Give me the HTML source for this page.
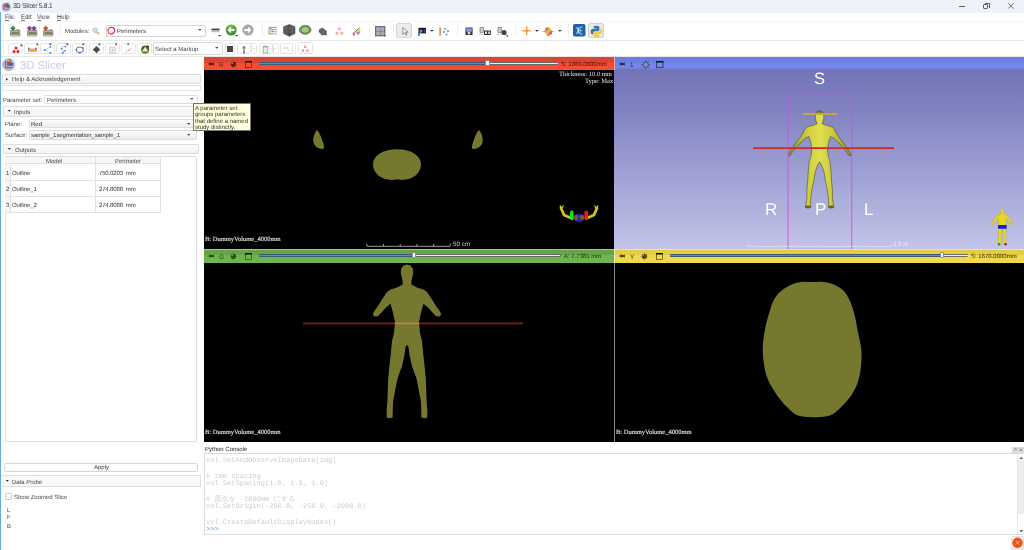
<!DOCTYPE html>
<html><head><meta charset="utf-8">
<style>
*{box-sizing:border-box;margin:0;padding:0}
html,body{width:1024px;height:550px;overflow:hidden;background:#fff;font-family:"Liberation Sans",sans-serif;font-size:6px;color:#222}
.a{position:absolute}
.t{position:absolute;white-space:nowrap;line-height:1;will-change:transform;text-rendering:geometricPrecision}
.serif{font-family:"Liberation Serif",serif}
.mono{font-family:"Liberation Mono",monospace}
</style></head><body>
<div class="a" style="left:0px;top:0px;width:1024px;height:12.6px;background:#eef2f9"></div>
<div class="a" style="left:1.2px;top:20.6px;width:1022.8px;height:1.8px;background:#f6f6f6"></div>
<svg class="a" style="left:1px;top:1.5px;" width="11" height="11" viewBox="0 0 11 11"><circle cx="5.2" cy="5" r="4.6" fill="#aab3d3"/><rect x="3.3" y="1.8" width="3.6" height="3.6" fill="#d2452f"/><rect x="5.3" y="1.2" width="2.2" height="2.2" fill="#3a9a3a"/><rect x="6.3" y="3.2" width="2.2" height="2.6" fill="#2f5fb0"/><path d="M2.6 2.6 L2.6 7.2 L7.6 7.2" stroke="#7c86aa" stroke-width="1" fill="none"/></svg>
<div class="t" style="left:13.3px;top:3.6px;font-size:6.9px;color:#1f1f1f;transform:scaleX(0.87);transform-origin:0 0">3D Slicer 5.8.1</div>
<div class="a" style="left:959px;top:5.7px;width:5.8px;height:0.9px;background:#5a5a5a"></div>
<div class="a" style="left:983px;top:4.2px;width:4.8px;height:4.6px;border:0.9px solid #555;border-radius:1.2px;background:#eef2f9"></div>
<div class="a" style="left:984.6px;top:3.4px;width:4.4px;height:0.8px;background:#555;border-radius:1px"></div>
<div class="a" style="left:988.6px;top:3.4px;width:0.8px;height:4.4px;background:#555;border-radius:1px"></div>
<svg class="a" style="left:1006.9px;top:2.2px;" width="8" height="8" viewBox="0 0 8 8"><path d="M1.2 1.2 L6.6 6.6 M6.6 1.2 L1.2 6.6" stroke="#555" stroke-width="0.8"/></svg>
<div class="a" style="left:0px;top:12.3px;width:1.2px;height:537.7px;background:#6fa8dc"></div>
<div class="t" style="left:5.2px;top:15.4px;font-size:6.7px;color:#333;transform:scaleX(0.88);transform-origin:0 0">File</div>
<div class="a" style="left:5.4px;top:19.9px;width:3.2px;height:0.5px;background:#777"></div>
<div class="t" style="left:21px;top:15.4px;font-size:6.7px;color:#333;transform:scaleX(0.88);transform-origin:0 0">Edit</div>
<div class="a" style="left:21.2px;top:19.9px;width:3.4px;height:0.5px;background:#777"></div>
<div class="t" style="left:37px;top:15.4px;font-size:6.7px;color:#333;transform:scaleX(0.88);transform-origin:0 0">View</div>
<div class="a" style="left:37.2px;top:19.9px;width:3.8px;height:0.5px;background:#777"></div>
<div class="t" style="left:56.8px;top:15.4px;font-size:6.7px;color:#333;transform:scaleX(0.88);transform-origin:0 0">Help</div>
<div class="a" style="left:57.0px;top:19.9px;width:4px;height:0.5px;background:#777"></div>
<div class="a" style="left:1.2px;top:39.6px;width:1022.8px;height:1.4px;background:#e9e9e9"></div>
<div class="a" style="left:1.2px;top:56px;width:1022.8px;height:0.8px;background:#e6e6e6"></div>
<div class="a" style="left:3px;top:25px;width:1px;height:11px;background:repeating-linear-gradient(#d8d8d8 0 1px,transparent 1px 2px)"></div>
<svg class="a" style="left:9.6px;top:24.5px;" width="11" height="12" viewBox="0 0 11 12"><path d="M6.3 5.2 Q8 3.6 9.6 5.2Z" fill="#e2cf7a" stroke="#6d6a50" stroke-width="0.35"/><rect x="0.5" y="5.3" width="9.4" height="5.8" rx="0.8" fill="#b7b293" stroke="#55533f" stroke-width="0.5"/><rect x="1.6" y="7.2" width="7.2" height="2.3" fill="#7b7864"/><rect x="1.4" y="10" width="7.6" height="0.6" fill="#e8dca0"/><path d="M3 0.9 L5.3 3.2 L3 5.5 L0.7000000000000002 3.2Z" fill="#2a8a4a" stroke="#333" stroke-width="0.35"/></svg>
<svg class="a" style="left:26.6px;top:24.5px;" width="11" height="12" viewBox="0 0 11 12"><path d="M6.3 5.2 Q8 3.6 9.6 5.2Z" fill="#e2cf7a" stroke="#6d6a50" stroke-width="0.35"/><rect x="0.5" y="5.3" width="9.4" height="5.8" rx="0.8" fill="#b7b293" stroke="#55533f" stroke-width="0.5"/><rect x="1.6" y="7.2" width="7.2" height="2.3" fill="#7b7864"/><rect x="1.4" y="10" width="7.6" height="0.6" fill="#e8dca0"/><path d="M2.4 0.9 L4.699999999999999 3.2 L2.4 5.5 L0.10000000000000009 3.2Z" fill="#8a3ab0" stroke="#333" stroke-width="0.35"/><path d="M6.9 0.9 L9.2 3.2 L6.9 5.5 L4.6000000000000005 3.2Z" fill="#8a3ab0" stroke="#333" stroke-width="0.35"/></svg>
<svg class="a" style="left:43px;top:24.5px;" width="11" height="12" viewBox="0 0 11 12"><path d="M6.3 5.2 Q8 3.6 9.6 5.2Z" fill="#e2cf7a" stroke="#6d6a50" stroke-width="0.35"/><rect x="0.5" y="5.3" width="9.4" height="5.8" rx="0.8" fill="#b7b293" stroke="#55533f" stroke-width="0.5"/><rect x="1.6" y="7.2" width="7.2" height="2.3" fill="#7b7864"/><rect x="1.4" y="10" width="7.6" height="0.6" fill="#e8dca0"/><path d="M2.7 0.9 L5.0 3.2 L2.7 5.5 L0.40000000000000036 3.2Z" fill="#d2541c" stroke="#333" stroke-width="0.35"/></svg>
<div class="a" style="left:60px;top:24px;width:0.8px;height:13px;background:#efefef"></div>
<div class="t" style="left:65px;top:28.9px;font-size:6px;color:#444">Modules:</div>
<svg class="a" style="left:92px;top:26.5px;" width="8" height="8" viewBox="0 0 8 8"><circle cx="3.2" cy="3.2" r="2.2" fill="#cfe3f5" stroke="#8fb6d8" stroke-width="0.7"/><path d="M4.8 4.8 L7 7" stroke="#c89a50" stroke-width="1.2"/></svg>
<div class="a" style="left:105.5px;top:24.6px;width:100px;height:12.2px;border:0.8px solid #d4d4d4;border-radius:2px;background:#fff"></div>
<svg class="a" style="left:106.5px;top:26px;" width="9" height="9" viewBox="0 0 9 9"><ellipse cx="4.3" cy="4.6" rx="3.2" ry="3.4" transform="rotate(35 4.3 4.6)" fill="none" stroke="#e8202a" stroke-width="1.1"/></svg>
<div class="t" style="left:117px;top:29px;font-size:6px;color:#333">Perimeters</div>
<svg class="a" style="left:197.6px;top:29.400000000000002px;" width="3.8" height="2.3" viewBox="0 0 3.8 2.3"><path d="M0 0 L3.8 0 L1.9 1.8Z" fill="#444"/></svg>
<svg class="a" style="left:210.5px;top:27.5px;" width="9" height="5" viewBox="0 0 9 5"><rect x="0.5" y="0.6" width="8" height="1.8" fill="#3a3a3a"/><rect x="0.5" y="2.4" width="8" height="1.8" fill="#bdbdbd"/></svg>
<svg class="a" style="left:218.4px;top:34.9px;" width="3.2" height="1.9" viewBox="0 0 3.2 1.9"><path d="M0 0 L3.2 0 L1.6 1.4Z" fill="#333"/></svg>
<svg class="a" style="left:225px;top:24px;" width="12" height="12" viewBox="0 0 12 12"><defs><radialGradient id="gg" cx="0.4" cy="0.3" r="0.8"><stop offset="0" stop-color="#7ccc4a"/><stop offset="1" stop-color="#2b7d21"/></radialGradient></defs><circle cx="6.1" cy="6" r="5.5" fill="url(#gg)"/><path d="M2.6 6 L6 2.8 L6 4.9 L9.6 4.9 L9.6 7.1 L6 7.1 L6 9.2Z" fill="#fff"/></svg>
<svg class="a" style="left:235.0px;top:34.9px;" width="3.2" height="1.9" viewBox="0 0 3.2 1.9"><path d="M0 0 L3.2 0 L1.6 1.4Z" fill="#333"/></svg>
<svg class="a" style="left:241.5px;top:24px;" width="12" height="12" viewBox="0 0 12 12"><circle cx="6" cy="6" r="5.3" fill="#a8a8a8" stroke="#9a9a9a" stroke-width="0.5"/><path d="M9.4 6 L6 2.8 L6 4.9 L2.4 4.9 L2.4 7.1 L6 7.1 L6 9.2Z" fill="#fff"/></svg>
<svg class="a" style="left:251.4px;top:35.2px;" width="2.2" height="1.3" viewBox="0 0 2.2 1.3"><path d="M0 0 L2.2 0 L1.1 0.8Z" fill="#bbb"/></svg>
<div class="a" style="left:262px;top:24px;width:0.8px;height:13px;background:#efefef"></div>
<svg class="a" style="left:267.5px;top:26px;" width="10" height="10" viewBox="0 0 10 10"><rect x="2" y="0.8" width="7" height="1" fill="#999"/><rect x="2" y="3" width="7" height="1" fill="#aaa"/><rect x="2" y="5.2" width="7" height="1" fill="#aaa"/><rect x="2" y="7.4" width="7" height="1" fill="#aaa"/><path d="M1 0.5 V8.5" stroke="#555" stroke-width="0.6"/><circle cx="2.5" cy="2.6" r="1" fill="#4a9ee0"/><circle cx="4.5" cy="5.2" r="1" fill="#5abf4a"/><circle cx="2.5" cy="7.8" r="1" fill="#e8a040"/></svg>
<svg class="a" style="left:282.5px;top:24px;" width="13" height="13" viewBox="0 0 13 13"><path d="M6.3 0.5 L12 2.8 L12 9.6 L6.3 12.3 L0.6 9.6 L0.6 2.8Z" fill="#555" stroke="#333" stroke-width="0.5"/><path d="M0.6 2.8 L6.3 5.2 L12 2.8" stroke="#888" stroke-width="0.5" fill="none"/><path d="M6.3 5.2 V12.3" stroke="#333" stroke-width="0.5"/><path d="M3 4 L3 11 M9.5 4 L9.5 11 M0.6 6 L6.3 8.5 L12 6" stroke="#777" stroke-width="0.4" fill="none"/></svg>
<svg class="a" style="left:299px;top:25px;" width="13" height="10" viewBox="0 0 13 10"><ellipse cx="6.2" cy="4.8" rx="5.8" ry="4.5" fill="#6e9a56" stroke="#3e5f30" stroke-width="0.6"/><ellipse cx="6.2" cy="4.8" rx="3.4" ry="2.6" fill="#a8c890"/></svg>
<svg class="a" style="left:318px;top:26.5px;" width="10" height="9" viewBox="0 0 10 9"><path d="M1 3 L4 0.8 L8.5 4 L8.5 8 L4 8 L1 5Z" fill="#666" stroke="#444" stroke-width="0.4"/></svg>
<svg class="a" style="left:334.5px;top:26.5px;" width="9" height="9" viewBox="0 0 9 9"><rect x="3" y="0.5" width="2.8" height="2.8" fill="#f5b0a8"/><rect x="0.5" y="4.8" width="2.8" height="2.8" fill="#f5b0a8"/><rect x="5.4" y="4.8" width="2.8" height="2.8" fill="#f5b0a8"/></svg>
<svg class="a" style="left:351.5px;top:26.5px;" width="9" height="9" viewBox="0 0 9 9"><path d="M0.8 7.2 L7.6 0.8" stroke="#333" stroke-width="0.9"/><rect x="5.5" y="3" width="2.8" height="3" fill="#e6c050"/><rect x="4.5" y="5" width="3" height="2.4" fill="#c070e0"/><circle cx="2" cy="7.8" r="1" fill="#f05050"/></svg>
<div class="a" style="left:369px;top:24px;width:0.8px;height:13px;background:#efefef"></div>
<svg class="a" style="left:375px;top:26px;" width="12" height="11" viewBox="0 0 12 11"><rect x="0.5" y="0.5" width="9.5" height="9.5" fill="#777" stroke="#444" stroke-width="0.6"/><rect x="1.2" y="1.2" width="3.8" height="3.8" fill="#aaa"/><rect x="5.5" y="1.2" width="3.8" height="3.8" fill="#a8a8d0"/><rect x="1.2" y="5.5" width="3.8" height="3.8" fill="#aaa"/><rect x="5.5" y="5.5" width="3.8" height="3.8" fill="#aaa"/><path d="M9 9.6 L11 9.6 L10 10.8Z" fill="#333"/></svg>
<div class="a" style="left:392.5px;top:24px;width:0.8px;height:13px;background:#efefef"></div>
<div class="a" style="left:396.2px;top:23.1px;width:15.7px;height:15.4px;border:0.8px solid #d6d6d6;border-radius:2px;background:#ececec"></div>
<svg class="a" style="left:401.5px;top:27px;" width="7" height="9" viewBox="0 0 7 9"><path d="M0.8 0.6 L0.8 7.4 L2.6 5.6 L4 8.2 L5 7.8 L3.8 5.2 L6.2 5.2Z" fill="#f4f4f4" stroke="#555" stroke-width="0.6"/></svg>
<svg class="a" style="left:417px;top:26.5px;" width="10" height="10" viewBox="0 0 10 10"><rect x="1.5" y="0.8" width="7.5" height="5.6" fill="#111"/><rect x="2.3" y="2.6" width="6" height="3" fill="url(#rb)"/><defs><linearGradient id="rb"><stop offset="0" stop-color="#f00"/><stop offset="0.33" stop-color="#0f0"/><stop offset="0.66" stop-color="#00f"/><stop offset="1" stop-color="#f0f"/></linearGradient></defs><path d="M2 5 L2 9" stroke="#3a6ac8" stroke-width="1.6"/><circle cx="2" cy="5" r="1.1" fill="#3a6ac8"/></svg>
<svg class="a" style="left:430.1px;top:29.95px;" width="3.8" height="2.2" viewBox="0 0 3.8 2.2"><path d="M0 0 L3.8 0 L1.9 1.7Z" fill="#333"/></svg>
<svg class="a" style="left:437.5px;top:26.5px;" width="12" height="9" viewBox="0 0 12 9"><rect x="1.2" y="0.4" width="2" height="8.2" fill="#e0a040"/><circle cx="7" cy="1.6" r="0.9" fill="#4a7ad0"/><circle cx="10" cy="4.2" r="0.9" fill="#4a7ad0"/><circle cx="6" cy="5" r="0.9" fill="#4a7ad0"/><circle cx="8.5" cy="7.6" r="0.9" fill="#4a7ad0"/><path d="M7 1.6 L10 4.2 L8.5 7.6 L6 5Z" fill="none" stroke="#9ab0e0" stroke-width="0.4"/></svg>
<div class="a" style="left:457px;top:24px;width:0.8px;height:13px;background:#efefef"></div>
<svg class="a" style="left:464.5px;top:26.5px;" width="8" height="9" viewBox="0 0 8 9"><rect x="0.4" y="0.5" width="7.2" height="7.5" rx="0.6" fill="#3a3a4a"/><rect x="1.2" y="1.3" width="5.6" height="3.4" fill="#8a9ad8"/><circle cx="4" cy="6.1" r="1.3" fill="#ddd"/></svg>
<svg class="a" style="left:478.5px;top:26.5px;" width="13" height="9" viewBox="0 0 13 9"><rect x="1" y="0.5" width="3.5" height="5" fill="#c8c8e0" stroke="#555" stroke-width="0.5"/><path d="M0.5 8 L1.5 6.5 M3 8 L4 6.5" stroke="#c05030" stroke-width="0.7"/><rect x="5" y="3.5" width="7" height="4.5" fill="#333"/><rect x="6" y="4.5" width="2" height="2.5" fill="#ddd"/><rect x="9.2" y="4.5" width="2" height="2.5" fill="#ddd"/></svg>
<svg class="a" style="left:496.5px;top:26.5px;" width="12" height="10" viewBox="0 0 12 10"><rect x="1" y="0.5" width="3.5" height="5" fill="#c8c8e0" stroke="#555" stroke-width="0.5"/><path d="M0.5 8 L1.5 6.5 M3 8 L4 6.5" stroke="#c05030" stroke-width="0.7"/><circle cx="7" cy="5.5" r="2.6" fill="#444"/><path d="M9 7.5 L10.5 9" stroke="#444" stroke-width="1"/><path d="M9.2 8.8 L11.4 8.8 L10.3 9.9Z" fill="#333"/></svg>
<div class="a" style="left:515px;top:24px;width:0.8px;height:13px;background:#efefef"></div>
<svg class="a" style="left:521.5px;top:26px;" width="9.5" height="9.5" viewBox="0 0 9.5 9.5"><path d="M4.7 0.8 V8.6 M0.8 4.7 H8.6" stroke="#e8a850" stroke-width="1.5" stroke-linecap="round"/><circle cx="4.7" cy="4.7" r="1.3" fill="#e09838"/></svg>
<svg class="a" style="left:535.4px;top:29.65px;" width="3.8" height="2.2" viewBox="0 0 3.8 2.2"><path d="M0 0 L3.8 0 L1.9 1.7Z" fill="#333"/></svg>
<svg class="a" style="left:542.4px;top:25.8px;" width="13" height="11" viewBox="0 0 13 11"><path d="M6.2 0.5 L8.2 4 L12.3 5.4 L8.2 7 L6.5 10.5 L4.5 7 L0.4 5.4 L4.5 4Z" fill="#7cc060"/><path d="M3 1.5 L8 2.5 L10.5 8 L5 10 Z" fill="#e04040" opacity="0.85"/><path d="M7.5 1 L9.5 3.5 L6 9.5 L3.5 6Z" fill="#f0d050" opacity="0.8"/></svg>
<svg class="a" style="left:558.3000000000001px;top:29.65px;" width="3.8" height="2.2" viewBox="0 0 3.8 2.2"><path d="M0 0 L3.8 0 L1.9 1.7Z" fill="#333"/></svg>
<div class="a" style="left:568.2px;top:24px;width:0.8px;height:13px;background:#efefef"></div>
<svg class="a" style="left:573.3px;top:24.3px;" width="12.5" height="12.5" viewBox="0 0 12.5 12.5"><rect x="0" y="0" width="12.5" height="12.5" rx="2" fill="#1f5fae"/><path d="M3 4 L5.5 4 L5.5 9 L3 9 M4 5.5 L5.5 6.5 L4 7.5" stroke="#ddeeff" stroke-width="0.9" fill="none"/><path d="M9.5 3 L7 3 L7 10 L9.5 10 M7 6.5 L9.5 6.5" stroke="#7fdcf0" stroke-width="1" fill="none"/></svg>
<div class="a" style="left:588.1px;top:23.1px;width:16px;height:15.3px;border:0.8px solid #d0d0d0;border-radius:2px;background:#e9e9e9"></div>
<svg class="a" style="left:590px;top:25px;" width="13" height="13" viewBox="0 0 13 13"><path d="M6.3 0.8 C3.5 0.8 3.6 2 3.6 2 L3.6 3.4 L6.4 3.4 L6.4 3.9 L2.5 3.9 C2.5 3.9 0.6 3.7 0.6 6.5 C0.6 9.3 2.3 9.2 2.3 9.2 L3.3 9.2 L3.3 7.9 C3.3 7.9 3.2 6.2 5 6.2 L7.8 6.2 C7.8 6.2 9.4 6.2 9.4 4.6 L9.4 2.2 C9.4 2.2 9.6 0.8 6.3 0.8Z" fill="#3d74aa"/><path d="M6.7 12.2 C9.5 12.2 9.4 11 9.4 11 L9.4 9.6 L6.6 9.6 L6.6 9.1 L10.5 9.1 C10.5 9.1 12.4 9.3 12.4 6.5 C12.4 3.7 10.7 3.8 10.7 3.8 L9.7 3.8 L9.7 5.1 C9.7 5.1 9.8 6.8 8 6.8 L5.2 6.8 C5.2 6.8 3.6 6.8 3.6 8.4 L3.6 10.8 C3.6 10.8 3.4 12.2 6.7 12.2Z" fill="#f5d040"/></svg>
<div class="a" style="left:3px;top:43px;width:1px;height:11px;background:repeating-linear-gradient(#d8d8d8 0 1px,transparent 1px 2px)"></div>
<div class="a" style="left:8.1px;top:42.7px;width:15px;height:11.8px;border:0.8px solid #e4e4e4;border-radius:1.5px;background:#fff"></div>
<div class="a" style="left:24.2px;top:42.7px;width:15px;height:11.8px;border:0.8px solid #e4e4e4;border-radius:1.5px;background:#fff"></div>
<div class="a" style="left:39.8px;top:42.7px;width:15px;height:11.8px;border:0.8px solid #e4e4e4;border-radius:1.5px;background:#fff"></div>
<div class="a" style="left:56.3px;top:42.7px;width:15px;height:11.8px;border:0.8px solid #e4e4e4;border-radius:1.5px;background:#fff"></div>
<div class="a" style="left:72.2px;top:42.7px;width:15px;height:11.8px;border:0.8px solid #e4e4e4;border-radius:1.5px;background:#fff"></div>
<div class="a" style="left:89px;top:42.7px;width:15px;height:11.8px;border:0.8px solid #e4e4e4;border-radius:1.5px;background:#fff"></div>
<div class="a" style="left:105px;top:42.7px;width:15px;height:11.8px;border:0.8px solid #e4e4e4;border-radius:1.5px;background:#fff"></div>
<div class="a" style="left:121px;top:42.7px;width:15px;height:11.8px;border:0.8px solid #e4e4e4;border-radius:1.5px;background:#fff"></div>
<div class="a" style="left:137px;top:42.7px;width:15px;height:11.8px;border:0.8px solid #e4e4e4;border-radius:1.5px;background:#fff"></div>
<svg class="a" style="left:12px;top:45.5px;" width="9" height="8" viewBox="0 0 9 8"><circle cx="4" cy="2" r="1.5" fill="#d8202a"/><circle cx="2" cy="5.4" r="1.5" fill="#d8202a"/><circle cx="6" cy="5.4" r="1.5" fill="#d8202a"/></svg>
<svg class="a" style="left:20.2px;top:44.2px;" width="2.6" height="2.6" viewBox="0 0 2.6 2.6"><path d="M1.3 0 V2.6 M0 1.3 H2.6" stroke="#333" stroke-width="0.6"/></svg>
<svg class="a" style="left:27px;top:45px;" width="11" height="8" viewBox="0 0 11 8"><rect x="1" y="4.2" width="9" height="2.5" fill="#e8a030"/><circle cx="1.8" cy="3.4" r="1" fill="#3a7ad8"/><circle cx="8.8" cy="3.4" r="1" fill="#3a7ad8"/><path d="M1.8 3.4 H8.8" stroke="#e88" stroke-width="0.4"/></svg>
<svg class="a" style="left:35.7px;top:43.2px;" width="2.6" height="2.6" viewBox="0 0 2.6 2.6"><path d="M1.3 0 V2.6 M0 1.3 H2.6" stroke="#333" stroke-width="0.6"/></svg>
<svg class="a" style="left:43px;top:44.5px;" width="11" height="9" viewBox="0 0 11 9"><path d="M7.5 1.5 L1.8 5 L7.5 8" stroke="#8ab0e0" stroke-width="0.5" fill="none"/><circle cx="7.5" cy="1.8" r="0.9" fill="#3a7ad8"/><circle cx="1.8" cy="5" r="0.9" fill="#3a7ad8"/><circle cx="7.5" cy="7.8" r="0.9" fill="#3a7ad8"/></svg>
<svg class="a" style="left:49.2px;top:42.7px;" width="2.6" height="2.6" viewBox="0 0 2.6 2.6"><path d="M1.3 0 V2.6 M0 1.3 H2.6" stroke="#333" stroke-width="0.6"/></svg>
<svg class="a" style="left:59px;top:44.5px;" width="11" height="9" viewBox="0 0 11 9"><path d="M6.5 1.5 Q1.5 1 3 4 Q5.5 6 4 8" stroke="#7a9ad0" stroke-width="0.6" fill="none"/><circle cx="6.5" cy="1.6" r="0.9" fill="#3a7ad8"/><circle cx="2.6" cy="3.6" r="0.9" fill="#3a7ad8"/><circle cx="6" cy="5.8" r="0.9" fill="#3a7ad8"/><circle cx="3.8" cy="8" r="0.9" fill="#3a7ad8"/></svg>
<svg class="a" style="left:66.2px;top:43.2px;" width="2.6" height="2.6" viewBox="0 0 2.6 2.6"><path d="M1.3 0 V2.6 M0 1.3 H2.6" stroke="#333" stroke-width="0.6"/></svg>
<svg class="a" style="left:75px;top:44.5px;" width="11" height="9" viewBox="0 0 11 9"><ellipse cx="4.8" cy="4.8" rx="3.6" ry="2.8" stroke="#333" stroke-width="0.7" fill="none"/><circle cx="1.4" cy="4.8" r="0.9" fill="#3a7ad8"/><circle cx="7.8" cy="3" r="0.9" fill="#3a7ad8"/><circle cx="4.5" cy="7.6" r="0.9" fill="#3a7ad8"/></svg>
<svg class="a" style="left:82.2px;top:43.2px;" width="2.6" height="2.6" viewBox="0 0 2.6 2.6"><path d="M1.3 0 V2.6 M0 1.3 H2.6" stroke="#333" stroke-width="0.6"/></svg>
<svg class="a" style="left:92px;top:44.5px;" width="10" height="9" viewBox="0 0 10 9"><path d="M4.5 1.2 L8 4.6 L4.5 8 L1 4.6Z" fill="#4a4a4a" stroke="#333" stroke-width="0.4"/></svg>
<svg class="a" style="left:98.2px;top:43.2px;" width="2.6" height="2.6" viewBox="0 0 2.6 2.6"><path d="M1.3 0 V2.6 M0 1.3 H2.6" stroke="#333" stroke-width="0.6"/></svg>
<svg class="a" style="left:108px;top:44.5px;" width="10" height="9" viewBox="0 0 10 9"><rect x="1.5" y="2" width="6" height="6" rx="1.2" fill="#e4ecf8" stroke="#a8c0e8" stroke-width="0.6"/><circle cx="4.5" cy="5" r="0.6" fill="#e05050"/></svg>
<svg class="a" style="left:114.7px;top:43.2px;" width="2.6" height="2.6" viewBox="0 0 2.6 2.6"><path d="M1.3 0 V2.6 M0 1.3 H2.6" stroke="#333" stroke-width="0.6"/></svg>
<svg class="a" style="left:124px;top:44.5px;" width="10" height="9" viewBox="0 0 10 9"><path d="M1.5 7.5 L8 2.5" stroke="#f09090" stroke-width="0.6"/><circle cx="5" cy="5" r="0.6" fill="#e05050"/></svg>
<svg class="a" style="left:126.7px;top:42.900000000000006px;" width="2.6" height="2.6" viewBox="0 0 2.6 2.6"><path d="M1.3 0 V2.6 M0 1.3 H2.6" stroke="#333" stroke-width="0.6"/></svg>
<svg class="a" style="left:139.5px;top:44px;" width="11" height="10" viewBox="0 0 11 10"><circle cx="5.2" cy="5.5" r="4" fill="#4a6a20"/><path d="M5.2 2.8 L8.4 7.4 L2 7.4Z" fill="#e8f0d0"/><circle cx="8" cy="2.5" r="1" fill="#222"/></svg>
<div class="a" style="left:153px;top:42.2px;width:69.6px;height:12.5px;border:0.8px solid #d6d6d6;border-radius:2px;background:#fff"></div>
<div class="t" style="left:155px;top:46.8px;font-size:6px;color:#444">Select a Markup</div>
<svg class="a" style="left:214.6px;top:47.300000000000004px;" width="3.8" height="2.3" viewBox="0 0 3.8 2.3"><path d="M0 0 L3.8 0 L1.9 1.8Z" fill="#444"/></svg>
<div class="a" style="left:225px;top:43px;width:9.5px;height:11.5px;border:0.8px solid #e4e4e4;border-radius:1.5px;background:#fff"></div>
<div class="a" style="left:226.6px;top:45.6px;width:6.2px;height:6.2px;background:#444"></div>
<div class="a" style="left:237px;top:42.7px;width:14px;height:11.8px;border:0.8px solid #e4e4e4;border-radius:1.5px;background:#fff"></div>
<svg class="a" style="left:241px;top:44.5px;" width="6" height="9" viewBox="0 0 6 9"><path d="M3 0.8 V8" stroke="#555" stroke-width="1"/><path d="M1.4 2.8 H4.6" stroke="#555" stroke-width="0.8"/><circle cx="3" cy="7.6" r="0.9" fill="#555"/></svg>
<div class="a" style="left:251px;top:42.7px;width:6px;height:11.8px;border:0.8px solid #e4e4e4;border-radius:1.5px;background:#fff"></div>
<svg class="a" style="left:252.9px;top:48.2px;" width="2.2" height="1.3" viewBox="0 0 2.2 1.3"><path d="M0 0 L2.2 0 L1.1 0.8Z" fill="#aaa"/></svg>
<div class="a" style="left:258.5px;top:42.7px;width:14px;height:11.8px;border:0.8px solid #e4e4e4;border-radius:1.5px;background:#fff"></div>
<svg class="a" style="left:262px;top:44.5px;" width="7" height="9" viewBox="0 0 7 9"><rect x="1.2" y="2" width="4.6" height="6" fill="#eee" stroke="#888" stroke-width="0.6"/><path d="M0.6 1.6 H6.4 M2.6 0.8 H4.4" stroke="#888" stroke-width="0.6"/></svg>
<div class="a" style="left:272.5px;top:42.7px;width:6px;height:11.8px;border:0.8px solid #e4e4e4;border-radius:1.5px;background:#fff"></div>
<svg class="a" style="left:274.4px;top:48.2px;" width="2.2" height="1.3" viewBox="0 0 2.2 1.3"><path d="M0 0 L2.2 0 L1.1 0.8Z" fill="#aaa"/></svg>
<div class="a" style="left:279.7px;top:42.7px;width:13.5px;height:11.8px;border:0.8px solid #e4e4e4;border-radius:1.5px;background:#fff"></div>
<svg class="a" style="left:283px;top:47px;" width="7" height="5" viewBox="0 0 7 5"><path d="M0.5 1 H5" stroke="#999" stroke-width="0.6"/><path d="M4.8 3.2 L6.2 3.2 L5.5 4Z" fill="#999"/></svg>
<div class="a" style="left:295.3px;top:43px;width:0.8px;height:11px;background:#ececec"></div>
<div class="a" style="left:297.7px;top:42.4px;width:15.6px;height:12.1px;border:0.8px solid #e4e4e4;border-radius:1.5px;background:#fff"></div>
<svg class="a" style="left:301.3px;top:44.5px;" width="9" height="8" viewBox="0 0 9 8"><rect x="3" y="0.6" width="2.4" height="2.4" fill="#f59888"/><rect x="0.8" y="4.4" width="2.4" height="2.4" fill="#f59888"/><rect x="5.2" y="4.4" width="2.4" height="2.4" fill="#f59888"/></svg>
<svg class="a" style="left:1.5px;top:58.3px;" width="14" height="14" viewBox="0 0 14 14"><circle cx="6.6" cy="6.7" r="6.1" fill="#b0b8d6" stroke="#9aa3c4" stroke-width="0.5"/><path d="M3.6 2.8 L3.6 9.6 L10.2 9.6" stroke="#6f7898" stroke-width="1.3" fill="none"/><rect x="5" y="3.4" width="3.6" height="4.6" fill="#d8452f"/><rect x="6.2" y="1.4" width="2.6" height="2.6" fill="#43a047"/><rect x="8.2" y="4.6" width="2.6" height="3.2" fill="#2f5fb0"/><rect x="5.6" y="2" width="1.6" height="1.6" fill="#f0c030"/></svg>
<div class="t" style="left:19.6px;top:60.5px;font-size:11.3px;color:#c3cbe5">3D Slicer</div>
<div class="a" style="left:1.8px;top:73.5px;width:198.8px;height:10.5px;border:0.8px solid #dedede;border-radius:1px;background:linear-gradient(#fbfbfb,#f2f2f2)"></div>
<svg class="a" style="left:5px;top:76.5px;" width="4" height="5" viewBox="0 0 4 5"><path d="M1 0.8 L3 2.3 L1 3.8Z" fill="#333"/></svg>
<div class="t" style="left:11.8px;top:77px;font-size:6px;color:#444">Help &amp; Acknowledgement</div>
<div class="a" style="left:1.8px;top:85px;width:198.8px;height:5.5px;border:0.8px solid #e2e2e2;border-radius:1px;background:#fff"></div>
<div class="t" style="left:3px;top:97.6px;font-size:6px;color:#444">Parameter set:</div>
<div class="a" style="left:44.3px;top:94.5px;width:153.8px;height:9.6px;border:0.8px solid #dcdcdc;border-radius:1.5px;background:#fff"></div>
<div class="t" style="left:46.5px;top:97.6px;font-size:6px;color:#333">Perimeters</div>
<svg class="a" style="left:189.6px;top:98.39999999999999px;" width="3.8" height="2.3" viewBox="0 0 3.8 2.3"><path d="M0 0 L3.8 0 L1.9 1.8Z" fill="#444"/></svg>
<div class="a" style="left:3px;top:105.5px;width:196px;height:11.2px;border:0.8px solid #dedede;border-radius:1px;background:linear-gradient(#fbfbfb,#f2f2f2)"></div>
<svg class="a" style="left:7px;top:109px;" width="5" height="4" viewBox="0 0 5 4"><path d="M0.7 0.9 L3.9 0.9 L2.3 2.8Z" fill="#333"/></svg>
<div class="t" style="left:14px;top:109.8px;font-size:6px;color:#444">Inputs</div>
<div class="t" style="left:5px;top:121.5px;font-size:6px;color:#444">Plane:</div>
<div class="a" style="left:28.5px;top:118.6px;width:168px;height:9.6px;border:0.8px solid #dcdcdc;border-radius:1.5px;background:linear-gradient(#fdfdfd,#ececec)"></div>
<div class="t" style="left:30.8px;top:121.5px;font-size:6px;color:#333">Red</div>
<svg class="a" style="left:186.6px;top:122.6px;" width="3.8" height="2.3" viewBox="0 0 3.8 2.3"><path d="M0 0 L3.8 0 L1.9 1.8Z" fill="#444"/></svg>
<div class="t" style="left:4.5px;top:132.6px;font-size:6px;color:#444">Surface:</div>
<div class="a" style="left:28.5px;top:130px;width:168px;height:9.5px;border:0.8px solid #dcdcdc;border-radius:1.5px;background:linear-gradient(#fdfdfd,#ececec)"></div>
<div class="t" style="left:30.8px;top:133px;font-size:6px;color:#333;letter-spacing:-0.08px">sample_1segmentation_sample_1</div>
<svg class="a" style="left:186.6px;top:133.9px;" width="3.8" height="2.3" viewBox="0 0 3.8 2.3"><path d="M0 0 L3.8 0 L1.9 1.8Z" fill="#444"/></svg>
<div class="a" style="left:3px;top:144px;width:195.5px;height:10.3px;border:0.8px solid #dedede;border-radius:1px;background:linear-gradient(#fbfbfb,#f2f2f2)"></div>
<svg class="a" style="left:7px;top:146.8px;" width="5" height="4" viewBox="0 0 5 4"><path d="M0.7 0.9 L3.9 0.9 L2.3 2.8Z" fill="#333"/></svg>
<div class="t" style="left:14.5px;top:147.8px;font-size:6px;color:#444">Outputs</div>
<div class="a" style="left:4.8px;top:156px;width:192.7px;height:285.7px;border:0.8px solid #dcdcdc;border-radius:1px;background:#fff"></div>
<div class="a" style="left:5.2px;top:156.6px;width:155px;height:7.9px;background:#f6f6f6;border-bottom:0.8px solid #e0e0e0"></div>
<div class="a" style="left:95.3px;top:156.6px;width:0.8px;height:55.8px;background:#e2e2e2"></div>
<div class="a" style="left:5.2px;top:164.5px;width:5.5px;height:48px;background:#f6f6f6;border-right:0.8px solid #e0e0e0"></div>
<div class="a" style="left:160px;top:156.6px;width:0.8px;height:56px;background:#e2e2e2"></div>
<div class="a" style="left:5.2px;top:180.3px;width:155.6px;height:0.8px;background:#e2e2e2"></div>
<div class="a" style="left:5.2px;top:196.2px;width:155.6px;height:0.8px;background:#e2e2e2"></div>
<div class="a" style="left:5.2px;top:212.2px;width:155.6px;height:0.8px;background:#e2e2e2"></div>
<div class="t" style="left:45.5px;top:158.8px;font-size:6px;color:#444">Model</div>
<div class="t" style="left:115px;top:158.8px;font-size:6px;color:#444">Perimeter</div>
<div class="t" style="left:6px;top:170.5px;font-size:6px;color:#444">1</div>
<div class="t" style="left:12px;top:170.5px;font-size:6px;color:#333;letter-spacing:-0.1px">Outline</div>
<div class="t" style="left:99.3px;top:170.5px;font-size:6px;color:#333;letter-spacing:-0.15px">750.0203&nbsp;&nbsp;mm</div>
<div class="t" style="left:6px;top:187.4px;font-size:6px;color:#444">2</div>
<div class="t" style="left:12px;top:187.4px;font-size:6px;color:#333;letter-spacing:-0.1px">Outline_1</div>
<div class="t" style="left:99.3px;top:187.4px;font-size:6px;color:#333;letter-spacing:-0.15px">274.8088&nbsp;&nbsp;mm</div>
<div class="t" style="left:6px;top:203.2px;font-size:6px;color:#444">3</div>
<div class="t" style="left:12px;top:203.2px;font-size:6px;color:#333;letter-spacing:-0.1px">Outline_2</div>
<div class="t" style="left:99.3px;top:203.2px;font-size:6px;color:#333;letter-spacing:-0.15px">274.8088&nbsp;&nbsp;mm</div>
<div class="a" style="left:3.5px;top:462.5px;width:194px;height:9.8px;border:0.8px solid #d6d6d6;border-radius:1.5px;background:#fdfdfd"></div>
<div class="t" style="left:94px;top:465.3px;font-size:6px;color:#333">Apply</div>
<div class="a" style="left:1.2px;top:475.4px;width:199.4px;height:11.4px;border:0.8px solid #dedede;border-left:none;border-radius:1px;background:#f9f9f9"></div>
<svg class="a" style="left:4.5px;top:479.3px;" width="5" height="4" viewBox="0 0 5 4"><path d="M0.7 0.9 L3.9 0.9 L2.3 2.8Z" fill="#333"/></svg>
<div class="t" style="left:12px;top:479.8px;font-size:6px;color:#444">Data Probe</div>
<div class="a" style="left:4.8px;top:493.3px;width:7px;height:7px;border:0.8px solid #cfcfcf;border-radius:1px;background:#fff"></div>
<div class="t" style="left:14.2px;top:494.6px;font-size:6px;color:#444">Show Zoomed Slice</div>
<div class="t" style="left:7px;top:508.4px;font-size:6px;color:#444">L</div>
<div class="t" style="left:7px;top:515.3px;font-size:6px;color:#444">F</div>
<div class="t" style="left:7px;top:524px;font-size:6px;color:#444">B</div>
<div class="a" style="left:204px;top:57px;width:410px;height:13px;background:linear-gradient(#dc4530 0,#dc4530 5.6px,#f44e35 6.4px,#f44e35 100%)"></div>
<svg class="a" style="left:207.4px;top:62.2px;" width="8" height="4" viewBox="0 0 8 4"><path d="M0.3 2 L2.5 2" stroke="#5a1e14" stroke-width="0.5"/><circle cx="3.3" cy="2" r="1.4" fill="#5a1e14"/><rect x="3.3" y="1" width="3.3" height="2" fill="#5a1e14"/><rect x="6.2" y="0.6" width="0.9" height="2.8" fill="#5a1e14"/></svg>
<div class="t" style="left:219.4px;top:62.6px;font-size:6.4px;color:#5a1e14">R</div>
<svg class="a" style="left:229.4px;top:60.2px;" width="9" height="9" viewBox="0 0 9 9"><path d="M4.3 0.2 V8.4 M0.2 4.3 H8.4" stroke="#5a1e14" stroke-width="0.45" opacity="0.7"/><rect x="2.1" y="1.9" width="4.6" height="4.9" rx="1.3" fill="#5a1e14"/><rect x="2.6" y="2.3" width="1.6" height="1.6" rx="0.6" fill="#ffffff" opacity="0.45"/></svg>
<svg class="a" style="left:245px;top:61.2px;" width="7" height="7" viewBox="0 0 7 7"><rect x="0.4" y="0.6" width="6.2" height="5.8" fill="none" stroke="#5a1e14" stroke-width="0.7"/><rect x="0.1" y="0" width="6.8" height="1.5" fill="#111"/></svg>
<div class="a" style="left:258.5px;top:62.3px;width:299.5px;height:2.6px;border-radius:1.3px;background:#6a6a6a"></div>
<div class="a" style="left:259.0px;top:62.8px;width:298.5px;height:1.6px;border-radius:0.8px;background:#ececec"></div>
<div class="a" style="left:258.5px;top:62.3px;width:228.10000000000002px;height:2.6px;border-radius:1.3px;background:#3a5a78"></div>
<div class="a" style="left:259.0px;top:62.8px;width:227.60000000000002px;height:1.6px;border-radius:0.8px;background:#3d98da"></div>
<div class="a" style="left:485.1px;top:59.9px;width:4.8px;height:6.4px;border:0.6px solid #8a8a8a;border-radius:1px;background:#fafafa"></div>
<div class="t" style="left:561px;top:61.6px;font-size:6px;color:#3a0c06">S: 1069.0000mm</div>
<div class="a" style="left:204px;top:70px;width:410px;height:179.5px;background:#000"></div>
<div class="a" style="left:615px;top:57px;width:409px;height:13px;background:linear-gradient(#6e7de2 0,#6e7de2 5.6px,#7685ec 6.4px,#7685ec 11px,#6b78d0 12px)"></div>
<svg class="a" style="left:618.2px;top:61.8px;" width="8" height="4" viewBox="0 0 8 4"><path d="M0.3 2 L2.5 2" stroke="#333" stroke-width="0.5"/><circle cx="3.3" cy="2" r="1.4" fill="#333"/><rect x="3.3" y="1" width="3.3" height="2" fill="#333"/><rect x="6.2" y="0.6" width="0.9" height="2.8" fill="#333"/></svg>
<div class="t" style="left:630.4px;top:62.6px;font-size:6.4px;color:#2a2a3a">1</div>
<svg class="a" style="left:640.5px;top:59.5px;" width="10" height="10" viewBox="0 0 10 10"><circle cx="4.8" cy="4.8" r="2.6" fill="#7f8ccf" stroke="#333" stroke-width="0.6"/><path d="M4.8 0.4 V2 M4.8 7.6 V9.2 M0.4 4.8 H2 M7.6 4.8 H9.2 M1.7 1.7 L2.8 2.8 M7.9 1.7 L6.8 2.8 M1.7 7.9 L2.8 6.8 M7.9 7.9 L6.8 6.8" stroke="#333" stroke-width="0.6"/></svg>
<svg class="a" style="left:655.8px;top:60.8px;" width="8" height="8" viewBox="0 0 8 8"><rect x="0.4" y="0.6" width="6.6" height="6" fill="none" stroke="#222" stroke-width="0.7"/><rect x="0.1" y="0" width="7.2" height="1.5" fill="#111"/></svg>
<div class="a" style="left:614px;top:70px;width:410px;height:179px;background:linear-gradient(#7274b7,#7f81c0 20%,#c2c4e8)"></div>
<div class="a" style="left:204px;top:249px;width:410px;height:13.8px;background:linear-gradient(#64a645 0,#64a645 5.6px,#6fb44e 6.4px,#6fb44e 100%)"></div>
<svg class="a" style="left:207.4px;top:254.2px;" width="8" height="4" viewBox="0 0 8 4"><path d="M0.3 2 L2.5 2" stroke="#2e4a1e" stroke-width="0.5"/><circle cx="3.3" cy="2" r="1.4" fill="#2e4a1e"/><rect x="3.3" y="1" width="3.3" height="2" fill="#2e4a1e"/><rect x="6.2" y="0.6" width="0.9" height="2.8" fill="#2e4a1e"/></svg>
<div class="t" style="left:219.4px;top:254.6px;font-size:6.4px;color:#2e4a1e">G</div>
<svg class="a" style="left:229.4px;top:252.2px;" width="9" height="9" viewBox="0 0 9 9"><path d="M4.3 0.2 V8.4 M0.2 4.3 H8.4" stroke="#2e4a1e" stroke-width="0.45" opacity="0.7"/><rect x="2.1" y="1.9" width="4.6" height="4.9" rx="1.3" fill="#2e4a1e"/><rect x="2.6" y="2.3" width="1.6" height="1.6" rx="0.6" fill="#ffffff" opacity="0.45"/></svg>
<svg class="a" style="left:245px;top:253.2px;" width="7" height="7" viewBox="0 0 7 7"><rect x="0.4" y="0.6" width="6.2" height="5.8" fill="none" stroke="#2e4a1e" stroke-width="0.7"/><rect x="0.1" y="0" width="6.8" height="1.5" fill="#111"/></svg>
<div class="a" style="left:258.5px;top:254.3px;width:302.0px;height:2.6px;border-radius:1.3px;background:#6a6a6a"></div>
<div class="a" style="left:259.0px;top:254.8px;width:301.0px;height:1.6px;border-radius:0.8px;background:#ececec"></div>
<div class="a" style="left:258.5px;top:254.3px;width:154.7px;height:2.6px;border-radius:1.3px;background:#3a5a78"></div>
<div class="a" style="left:259.0px;top:254.8px;width:154.2px;height:1.6px;border-radius:0.8px;background:#3d98da"></div>
<div class="a" style="left:411.7px;top:251.9px;width:4.8px;height:6.4px;border:0.6px solid #8a8a8a;border-radius:1px;background:#fafafa"></div>
<div class="t" style="left:563.5px;top:253.6px;font-size:6px;color:#1a2a10">A: 7.7381 mm</div>
<div class="a" style="left:204px;top:249px;width:410px;height:0.8px;background:#9ccc88"></div>
<div class="a" style="left:204px;top:262.8px;width:410px;height:179.2px;background:#000"></div>
<div class="a" style="left:615px;top:249px;width:409px;height:13.8px;background:linear-gradient(#e6cc40 0,#e6cc40 5.6px,#f0d84c 6.4px,#f0d84c 100%)"></div>
<svg class="a" style="left:618.4px;top:254.2px;" width="8" height="4" viewBox="0 0 8 4"><path d="M0.3 2 L2.5 2" stroke="#4a4218" stroke-width="0.5"/><circle cx="3.3" cy="2" r="1.4" fill="#4a4218"/><rect x="3.3" y="1" width="3.3" height="2" fill="#4a4218"/><rect x="6.2" y="0.6" width="0.9" height="2.8" fill="#4a4218"/></svg>
<div class="t" style="left:630.4px;top:254.6px;font-size:6.4px;color:#4a4218">Y</div>
<svg class="a" style="left:640.4px;top:252.2px;" width="9" height="9" viewBox="0 0 9 9"><path d="M4.3 0.2 V8.4 M0.2 4.3 H8.4" stroke="#4a4218" stroke-width="0.45" opacity="0.7"/><rect x="2.1" y="1.9" width="4.6" height="4.9" rx="1.3" fill="#4a4218"/><rect x="2.6" y="2.3" width="1.6" height="1.6" rx="0.6" fill="#ffffff" opacity="0.45"/></svg>
<svg class="a" style="left:656px;top:253.2px;" width="7" height="7" viewBox="0 0 7 7"><rect x="0.4" y="0.6" width="6.2" height="5.8" fill="none" stroke="#4a4218" stroke-width="0.7"/><rect x="0.1" y="0" width="6.8" height="1.5" fill="#111"/></svg>
<div class="a" style="left:669.5px;top:254.3px;width:298.5px;height:2.6px;border-radius:1.3px;background:#6a6a6a"></div>
<div class="a" style="left:670.0px;top:254.8px;width:297.5px;height:1.6px;border-radius:0.8px;background:#ececec"></div>
<div class="a" style="left:669.5px;top:254.3px;width:271.5px;height:2.6px;border-radius:1.3px;background:#3a5a78"></div>
<div class="a" style="left:670.0px;top:254.8px;width:271.0px;height:1.6px;border-radius:0.8px;background:#3d98da"></div>
<div class="a" style="left:939.5px;top:251.9px;width:4.8px;height:6.4px;border:0.6px solid #8a8a8a;border-radius:1px;background:#fafafa"></div>
<div class="t" style="left:971px;top:253.6px;font-size:6px;color:#2a2410">S: 1670.0000mm</div>
<div class="a" style="left:615px;top:249px;width:409px;height:0.8px;background:#f2e496"></div>
<div class="a" style="left:615px;top:262.8px;width:409px;height:179.2px;background:#000"></div>
<div class="a" style="left:614px;top:262.8px;width:1px;height:179.2px;background:#8a8a8a"></div>
<div class="a" style="left:614px;top:249px;width:1px;height:13.8px;background:#e8f0c0"></div>
<div class="a" style="left:613.6px;top:57px;width:1px;height:13px;background:#e9b0a8"></div>
<svg class="a" style="left:204px;top:70px;" width="410" height="172" viewBox="0 0 410 172"><path d="M193 79.3 C178 79.3 169 86 169 94.5 C169 103 177 109.9 188 109.9 C190.5 109.9 191.8 109.3 193 109.2 C194.2 109.3 195.5 109.9 198 109.9 C209 109.9 217 103 217 94.5 C217 86 208 79.3 193 79.3Z" fill="#767830"/><path d="M113 60 C110.5 63 108.5 68 109.5 72.5 C110.5 76 114 78.5 118 79 C120.5 79.5 120.2 77 119.5 74 C118 69 116 63 113 60Z" fill="#767830"/><path d="M275 60 C277.5 63 279.5 68 278.5 72.5 C277.5 76 274 78.5 270 79 C267.5 79.5 267.8 77 268.5 74 C270 69 272 63 275 60Z" fill="#767830"/></svg>
<div class="t serif" style="left:558.8px;top:72.3px;font-size:6.5px;color:#e8e8e8">Thickness: 10.0 mm</div>
<div class="t serif" style="left:585px;top:78.6px;font-size:6.5px;color:#e8e8e8">Type: Max</div>
<div class="t serif" style="left:205.3px;top:237.1px;font-size:6.5px;color:#d8d8d8;-webkit-text-stroke:0.2px #d8d8d8">B: DummyVolume_4000mm</div>
<svg class="a" style="left:364px;top:240px;" width="90" height="8" viewBox="0 0 90 8"><path d="M2.8 6.3 H86.2 M2.8 3.6 V6.3 M19.5 4 V6.3 M36.2 4 V6.3 M52.9 4 V6.3 M69.6 4 V6.3 M86.2 3.6 V6.3" stroke="#c0c0c0" stroke-width="0.8"/></svg>
<div class="t" style="left:452.8px;top:241.6px;font-size:6.3px;color:#d0d0d0">50 cm</div>
<svg class="a" style="left:555px;top:200px;" width="50" height="26" viewBox="0 0 50 26"><path d="M6 8 L9 15 L17 18.5" stroke="#d4c020" stroke-width="2.8" fill="none" stroke-linecap="round"/><path d="M42 8 L39 15 L31 18.5" stroke="#d4c020" stroke-width="2.8" fill="none" stroke-linecap="round"/><path d="M5 5.5 L6.5 8.5 L8.5 5.5 M43 5.5 L41.5 8.5 L39.5 5.5" stroke="#d4c020" stroke-width="1.3" fill="none"/><ellipse cx="24" cy="18" rx="5" ry="4.2" fill="#1b1bd0"/><ellipse cx="21" cy="17.5" rx="2.3" ry="2.8" fill="#6a6020"/><ellipse cx="27" cy="17.5" rx="2.3" ry="2.8" fill="#6a6020"/><rect x="15" y="10.5" width="3.6" height="9.5" rx="1.8" fill="#18e018"/><rect x="29.4" y="10.5" width="3.6" height="9.5" rx="1.8" fill="#f01818"/></svg>
<svg class="a" style="left:204px;top:263px;" width="410" height="179" viewBox="0 0 410 179"><g transform="translate(-204 -263)"><path d="M407.0 264.6 L403.5 265.5 L401.3 268.5 L400.8 272.0 L401.5 276.5 L402.6 280.5 L402.6 284.5 L397.0 287.5 L390.0 289.8 L386.6 292.5 L383.0 298.0 L378.0 306.0 L374.0 311.5 L372.8 314.8 L374.5 316.5 L378.0 316.2 L381.0 313.0 L385.5 308.0 L390.5 303.8 L392.8 312.0 L395.0 322.0 L394.0 333.0 L392.0 341.0 L390.6 355.5 L389.2 368.0 L388.2 378.6 L387.4 401.8 L386.6 411.0 L386.8 417.5 L389.5 418.2 L392.6 417.5 L392.8 410.0 L393.0 401.8 L397.5 378.6 L402.0 366.0 L404.4 355.5 L405.5 347.0 L407.0 344.8 L407.0 344.8 L408.5 347.0 L409.6 355.5 L412.0 366.0 L416.5 378.6 L421.0 401.8 L421.2 410.0 L421.4 417.5 L424.5 418.2 L427.2 417.5 L427.4 411.0 L426.6 401.8 L425.8 378.6 L424.8 368.0 L423.4 355.5 L422.0 341.0 L420.0 333.0 L419.0 322.0 L421.2 312.0 L423.5 303.8 L428.5 308.0 L433.0 313.0 L436.0 316.2 L439.5 316.5 L441.2 314.8 L440.0 311.5 L436.0 306.0 L431.0 298.0 L427.4 292.5 L424.0 289.8 L417.0 287.5 L411.4 284.5 L411.4 280.5 L412.5 276.5 L413.2 272.0 L412.7 268.5 L410.5 265.5 L407.0 264.6Z" fill="#767830"/><rect x="303" y="322.6" width="220" height="1.7" fill="#8c1a10" style="mix-blend-mode:screen"/></g></svg>
<div class="t serif" style="left:205.3px;top:430.1px;font-size:6.5px;color:#d8d8d8;-webkit-text-stroke:0.2px #d8d8d8">B: DummyVolume_4000mm</div>
<svg class="a" style="left:615px;top:263px;" width="409" height="179" viewBox="0 0 409 179"><g transform="translate(-615 -263)"><path d="M812.5 282.0 C817.4 282.0 822.3 281.2 827.2 282.4 C832.1 283.5 838.1 286.1 841.7 288.9 C845.3 291.7 846.9 294.9 849.0 299.0 C851.1 303.1 852.8 308.3 854.2 313.6 C855.7 318.9 856.5 324.7 857.7 331.0 C858.9 337.3 861.1 344.1 861.5 351.4 C861.9 358.7 861.1 367.9 859.8 374.7 C858.4 381.5 856.4 386.7 853.4 392.0 C850.4 397.3 845.6 402.7 841.7 406.6 C837.8 410.5 834.6 413.8 830.0 415.6 C825.4 417.4 819.3 417.2 814.0 417.2 C808.7 417.2 802.6 417.4 798.0 415.6 C793.4 413.8 790.4 410.5 786.5 406.6 C782.6 402.7 778.3 397.3 774.9 392.0 C771.5 386.7 768.2 381.5 766.2 374.7 C764.2 367.9 763.0 358.7 762.7 351.4 C762.5 344.1 763.7 337.3 764.7 331.0 C765.8 324.7 767.4 318.9 769.0 313.6 C770.6 308.3 771.9 303.1 774.3 299.0 C776.7 294.9 779.6 291.7 783.6 288.9 C787.6 286.1 793.2 283.5 798.0 282.4 C802.8 281.2 807.6 282.0 812.5 282.0Z" fill="#767830"/></g></svg>
<div class="t serif" style="left:616.3px;top:430.1px;font-size:6.5px;color:#d8d8d8;-webkit-text-stroke:0.2px #d8d8d8">B: DummyVolume_4000mm</div>
<div class="t" style="left:814px;top:70.5px;font-size:16.5px;color:#fff">S</div>
<div class="t" style="left:764.5px;top:200.5px;font-size:17px;color:#fff">R</div>
<div class="t" style="left:814.5px;top:200.5px;font-size:17px;color:#fff">P</div>
<div class="t" style="left:864px;top:200.5px;font-size:17px;color:#fff">L</div>
<svg class="a" style="left:615px;top:70px;" width="409" height="179" viewBox="0 0 409 179"><g transform="translate(-615 -70)">
<defs><linearGradient id="fy" x1="0" x2="1"><stop offset="0" stop-color="#8c8c22"/><stop offset="0.3" stop-color="#cccc40"/><stop offset="0.5" stop-color="#dede4e"/><stop offset="0.7" stop-color="#cccc40"/><stop offset="1" stop-color="#8c8c22"/></linearGradient></defs>
<path d="M819.6 110.5 L817.0 111.8 L815.5 114.5 L815.3 118.5 L816.3 121.5 L817.2 123.8 L813.0 125.3 L808.0 126.6 L805.0 128.8 L803.3 132.5 L800.0 137.5 L795.5 143.5 L791.5 149.0 L789.2 152.8 L788.4 155.8 L790.2 155.6 L792.5 151.8 L796.5 147.2 L801.5 141.8 L805.5 138.0 L808.8 136.6 L810.6 141.5 L811.8 150.0 L811.0 156.0 L809.2 162.0 L808.4 170.0 L807.6 182.0 L806.8 190.0 L806.8 199.0 L805.8 204.0 L805.3 207.5 L808.0 208.2 L810.8 207.5 L810.5 200.0 L811.8 190.0 L813.5 182.0 L815.2 172.0 L817.6 165.0 L819.6 161.8 L819.6 161.8 L821.6 165.0 L824.0 172.0 L825.7 182.0 L827.4 190.0 L828.7 200.0 L828.4 207.5 L831.2 208.2 L833.9 207.5 L833.4 204.0 L832.4 199.0 L832.4 190.0 L831.6 182.0 L830.8 170.0 L830.0 162.0 L828.2 156.0 L827.4 150.0 L828.6 141.5 L830.4 136.6 L833.7 138.0 L837.7 141.8 L842.7 147.2 L846.7 151.8 L849.0 155.6 L850.8 155.8 L850.0 152.8 L847.7 149.0 L843.7 143.5 L839.2 137.5 L835.9 132.5 L834.2 128.8 L831.2 126.6 L826.2 125.3 L822.0 123.8 L822.9 121.5 L823.9 118.5 L823.7 114.5 L822.2 111.8 L819.6 110.5Z" fill="url(#fy)" stroke="#4a4a14" stroke-width="0.7" stroke-opacity="0.8"/><ellipse cx="819.6" cy="112" rx="3.2" ry="1.6" fill="#5a5a18" opacity="0.7"/><ellipse cx="808" cy="206.8" rx="2.8" ry="1.3" fill="#4a4a18" opacity="0.8"/><ellipse cx="831.2" cy="206.8" rx="2.8" ry="1.3" fill="#4a4a18" opacity="0.8"/>
<rect x="788" y="95.3" width="63.8" height="154" fill="none" stroke="#cc4ee8" stroke-width="0.9"/>
<rect x="803" y="113.3" width="34" height="1.8" rx="0.5" fill="#c4aa40"/>
<rect x="753" y="147.2" width="141" height="1.8" rx="0.5" fill="#c0302a"/>
<path d="M748.5 246.5 H891 M748.5 244.5 V246.5 M891 244.5 V246.5" stroke="#e8e8f4" stroke-width="0.6"/>
</g></svg>
<svg class="a" style="left:615px;top:70px;" width="409" height="179" viewBox="0 0 409 179"><g transform="translate(-615 -70)"><path d="M748.5 245.3 V246.5" stroke="#e8e8f4" stroke-width="0.5"/><path d="M755.6 245.3 V246.5" stroke="#e8e8f4" stroke-width="0.5"/><path d="M762.8 245.3 V246.5" stroke="#e8e8f4" stroke-width="0.5"/><path d="M769.9 245.3 V246.5" stroke="#e8e8f4" stroke-width="0.5"/><path d="M777.0 245.3 V246.5" stroke="#e8e8f4" stroke-width="0.5"/><path d="M784.1 245.3 V246.5" stroke="#e8e8f4" stroke-width="0.5"/><path d="M791.3 245.3 V246.5" stroke="#e8e8f4" stroke-width="0.5"/><path d="M798.4 245.3 V246.5" stroke="#e8e8f4" stroke-width="0.5"/><path d="M805.5 245.3 V246.5" stroke="#e8e8f4" stroke-width="0.5"/><path d="M812.7 245.3 V246.5" stroke="#e8e8f4" stroke-width="0.5"/><path d="M819.8 245.3 V246.5" stroke="#e8e8f4" stroke-width="0.5"/><path d="M826.9 245.3 V246.5" stroke="#e8e8f4" stroke-width="0.5"/><path d="M834.1 245.3 V246.5" stroke="#e8e8f4" stroke-width="0.5"/><path d="M841.2 245.3 V246.5" stroke="#e8e8f4" stroke-width="0.5"/><path d="M848.3 245.3 V246.5" stroke="#e8e8f4" stroke-width="0.5"/><path d="M855.5 245.3 V246.5" stroke="#e8e8f4" stroke-width="0.5"/><path d="M862.6 245.3 V246.5" stroke="#e8e8f4" stroke-width="0.5"/><path d="M869.7 245.3 V246.5" stroke="#e8e8f4" stroke-width="0.5"/><path d="M876.8 245.3 V246.5" stroke="#e8e8f4" stroke-width="0.5"/><path d="M884.0 245.3 V246.5" stroke="#e8e8f4" stroke-width="0.5"/><path d="M891.1 245.3 V246.5" stroke="#e8e8f4" stroke-width="0.5"/></g></svg>
<div class="t" style="left:893px;top:241.8px;font-size:6.2px;color:#eeeef8">2.5 m</div>
<svg class="a" style="left:615px;top:70px;" width="409" height="179" viewBox="0 0 409 179"><g transform="translate(-615 -70)"><path d="M1002.2 208.0 L1000.8 209.0 L1000.6 211.5 L1001.2 213.5 L998.5 214.5 L996.5 216.0 L993.0 221.0 L990.5 225.3 L991.5 225.8 L994.5 222.0 L998.0 218.5 L998.3 225.0 L998.2 229.0 L998.5 236.0 L998.2 243.0 L998.8 244.0 L1001.2 244.0 L1001.0 236.0 L1001.5 230.0 L1002.2 229.3 L1002.2 229.3 L1002.9 230.0 L1003.4 236.0 L1003.2 244.0 L1005.6 244.0 L1006.2 243.0 L1005.9 236.0 L1006.2 229.0 L1006.1 225.0 L1006.4 218.5 L1009.9 222.0 L1012.9 225.8 L1013.9 225.3 L1011.4 221.0 L1007.9 216.0 L1005.9 214.5 L1003.2 213.5 L1003.8 211.5 L1003.6 209.0 L1002.2 208.0Z" fill="#e8d820" stroke="#a09010" stroke-width="0.3"/><rect x="998" y="225" width="8.6" height="3.8" rx="0.6" fill="#1a1ae0"/><circle cx="999" cy="244.3" r="1.2" fill="#1a8a2a"/><circle cx="1005.5" cy="244.3" r="1.2" fill="#a01818"/></g></svg>
<div class="t" style="left:205.3px;top:446.6px;font-size:6px;color:#222">Python Console</div>
<svg class="a" style="left:1011.8px;top:446.6px;" width="6" height="6" viewBox="0 0 6 6"><rect x="0.3" y="0.3" width="5.2" height="5.2" rx="0.8" fill="#ddd" stroke="#c4c4c4" stroke-width="0.5"/><path d="M1.6 4.2 L4.2 1.6 M2.6 1.6 H4.2 V3.2" stroke="#777" stroke-width="0.5" fill="none"/></svg>
<svg class="a" style="left:1018px;top:446.6px;" width="6" height="6" viewBox="0 0 6 6"><rect x="0.3" y="0.3" width="5.2" height="5.2" rx="0.8" fill="#ddd" stroke="#c4c4c4" stroke-width="0.5"/><path d="M1.6 1.6 L4.2 4.2 M4.2 1.6 L1.6 4.2" stroke="#666" stroke-width="0.6"/></svg>
<div class="a" style="left:203.8px;top:453.4px;width:820.2px;height:81.2px;border:0.8px solid #dcdcdc;background:#fff"></div>
<div class="a" style="left:1017.2px;top:454px;width:6.8px;height:80px;background:#fff;border-left:0.6px solid #e6e6e6"></div>
<div class="a" style="left:1017.5px;top:460px;width:6.5px;height:53.6px;background:#ececec"></div>
<svg class="a" style="left:1018.5px;top:455.5px;" width="5" height="4" viewBox="0 0 5 4"><path d="M0.5 3 L4 3 L2.25 0.8Z" fill="#555"/></svg>
<svg class="a" style="left:1018.5px;top:529px;" width="5" height="4" viewBox="0 0 5 4"><path d="M0.5 1 L4 1 L2.25 3.2Z" fill="#555"/></svg>
<div class="t mono" style="left:206.2px;top:458.3px;font-size:7.03px;color:#cdcdcd;white-space:pre">vol.SetAndObserveImageData(img)</div>
<div class="t mono" style="left:206.2px;top:473.64px;font-size:7.03px;color:#cdcdcd;white-space:pre"># 1mm spacing</div>
<div class="t mono" style="left:206.2px;top:481.31px;font-size:7.03px;color:#cdcdcd;white-space:pre">vol.SetSpacing(1.0, 1.0, 1.0)</div>
<div class="t mono" style="left:206.2px;top:496.65000000000003px;font-size:7.03px;color:#cdcdcd;white-space:pre"># 原点を -2000mm にする</div>
<div class="t mono" style="left:206.2px;top:504.32px;font-size:7.03px;color:#cdcdcd;white-space:pre">vol.SetOrigin(-256.0, -256.0, -2000.0)</div>
<div class="t mono" style="left:206.2px;top:519.66px;font-size:7.03px;color:#cdcdcd;white-space:pre">vol.CreateDefaultDisplayNodes()</div>
<div class="t mono" style="left:206.2px;top:527.33px;font-size:7.03px;color:#5aa0e0">&gt;&gt;&gt;</div>
<div class="a" style="left:1010.6px;top:535.8px;width:13.4px;height:14.2px;background:#f0f0f0;border:0.6px solid #e0e0e0;border-radius:2px"></div>
<svg class="a" style="left:1011px;top:536px;" width="13" height="13" viewBox="0 0 13 13"><circle cx="6.5" cy="6.7" r="5.2" fill="#e8561c"/><path d="M4.6 4.8 L8.4 8.6 M8.4 4.8 L4.6 8.6" stroke="#fbd6c0" stroke-width="0.8"/></svg>
<div class="a" style="left:193.2px;top:103.2px;width:58px;height:28px;border:0.7px solid #767676;background:#ffffdc"></div>
<div class="t" style="left:195.1px;top:106.1px;font-size:6px;color:#333">A parameter set</div>
<div class="t" style="left:195.1px;top:112.36999999999999px;font-size:6px;color:#333">groups parameters</div>
<div class="t" style="left:195.1px;top:118.63999999999999px;font-size:6px;color:#333">that define a named</div>
<div class="t" style="left:195.1px;top:124.91px;font-size:6px;color:#333">study distinctly.</div>
</body></html>
